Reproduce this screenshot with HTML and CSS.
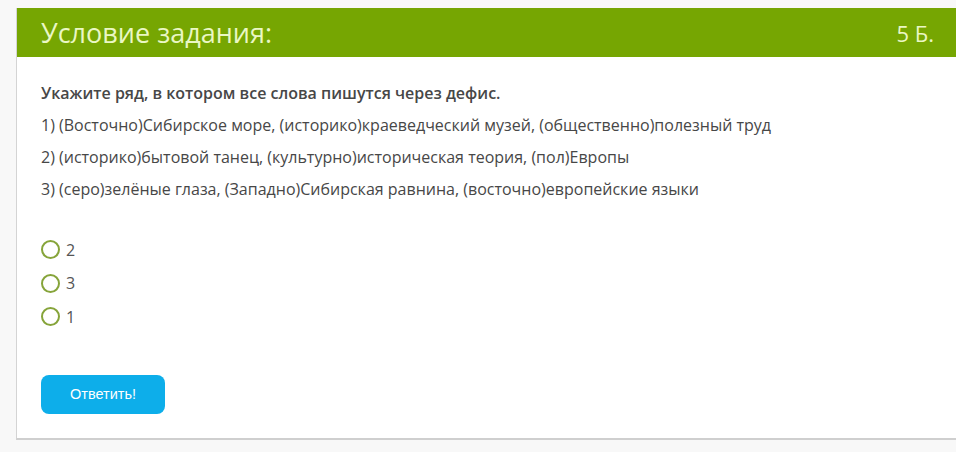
FILE: index.html
```html
<!DOCTYPE html>
<html>
<head>
	<meta charset="utf-8">
	<title>Условие задания</title>
	<link rel="stylesheet" href="styles.css">
</head>
<body>
	<div class="task">
		<div class="task-head">
			<h2>Условие задания:</h2>
			<span class="points">5 Б.</span>
		</div>
		<div class="task-body">
			<p class="question">Укажите ряд, в котором все слова пишутся через дефис.</p>
			<p>1) (Восточно)Сибирское море, (историко)краеведческий музей, (общественно)полезный труд</p>
			<p>2) (историко)бытовой танец, (культурно)историческая теория, (пол)Европы</p>
			<p>3) (серо)зелёные глаза, (Западно)Сибирская равнина, (восточно)европейские языки</p>

			<form class="answers">
				<label class="option"><input type="radio" name="answer" value="2"><span class="mark"></span>2</label>
				<label class="option"><input type="radio" name="answer" value="3"><span class="mark"></span>3</label>
				<label class="option"><input type="radio" name="answer" value="1"><span class="mark"></span>1</label>
				<button type="button" class="submit">Ответить!</button>
			</form>
		</div>
	</div>
</body>
</html>
```

FILE: styles.css
```css
body {
	margin: 0;
	padding: 8px 0 0 16px;
	background-color: #f8f8f8;
	font-family: "Open Sans", "Liberation Sans", sans-serif;
	color: #474747;
	overflow: hidden;
}

.task {
	background-color: #fff;
	border-left: 1px solid #d4d4d4;
	border-bottom: 2px solid #cfcfcf;
}

.task-head {
	display: flex;
	justify-content: space-between;
	align-items: center;
	height: 49px;
	padding: 0 22px 0 24px;
	background-color: #76a602;
	color: #eaf7c4;
}

.task-head h2 {
	margin: 0;
	font-size: 27px;
	font-weight: normal;
}

.points {
	font-size: 22px;
}

.task-body {
	padding: 25px 24px 24px;
}

.task-body p {
	margin: 0 0 10px;
	font-size: 16px;
	line-height: 22px;
}

.task-body .question {
	font-weight: 600;
}

.answers {
	margin-top: 33px;
}

.option {
	display: flex;
	align-items: center;
	height: 33.5px;
	font-size: 16px;
	color: #555;
	cursor: pointer;
}

.option input {
	display: none;
}

.mark {
	width: 15px;
	height: 15px;
	margin-right: 6px;
	border: 2px solid #86a43a;
	border-radius: 50%;
}

.option input:checked + .mark {
	background: radial-gradient(#76a602 40%, transparent 45%);
}

.submit {
	margin-top: 41px;
	width: 124px;
	height: 39px;
	border: none;
	border-radius: 8px;
	background-color: #0daeea;
	color: #fff;
	font-family: "Liberation Sans", Arial, sans-serif;
	font-size: 14.5px;
	cursor: pointer;
}

.submit:hover {
	background-color: #0b9fd6;
}
```
